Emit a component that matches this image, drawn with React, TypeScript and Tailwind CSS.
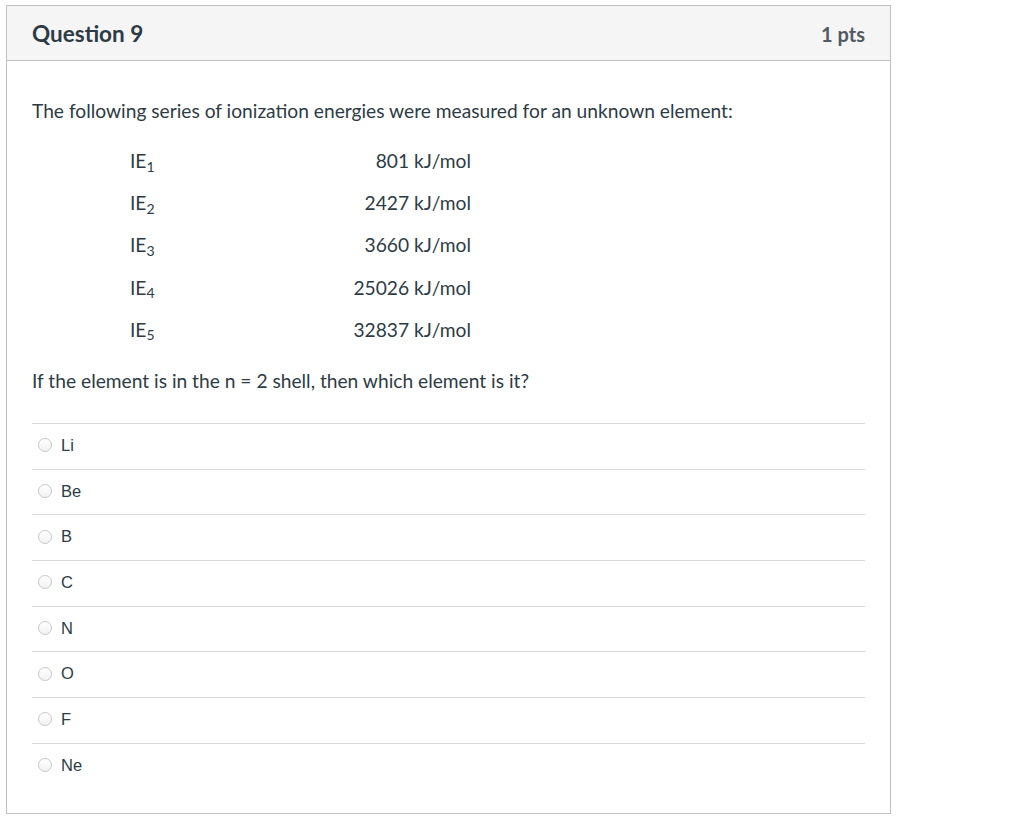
import React from "react"

const rows = [
  { n: "1", v: "801 kJ/mol" },
  { n: "2", v: "2427 kJ/mol" },
  { n: "3", v: "3660 kJ/mol" },
  { n: "4", v: "25026 kJ/mol" },
  { n: "5", v: "32837 kJ/mol" },
]

const answers = ["Li", "Be", "B", "C", "N", "O", "F", "Ne"]

export default function App() {
  return (
    <div className="min-h-[840px] bg-white pl-[6px] pt-[5px] font-['Lato',sans-serif] text-[#2d3b45]">
      <div className="w-[885px] border border-[#c1c1c1] bg-white">
        <div className="flex h-[55px] items-center justify-between border-b border-[#c1c1c1] bg-[#f5f5f5] px-[25px] pt-[2px]">
          <h2 className="text-[22.5px] font-bold leading-none text-[#2d3b45]">Question 9</h2>
          <span className="text-[20px] font-bold leading-none text-[#515a63]">1 pts</span>
        </div>
        <div className="px-[25px] pb-[25px] pt-[37px]">
          <p className="text-[19.2px] leading-[26px]">
            The following series of ionization energies were measured for an unknown element:
          </p>
          <table className="ml-[98px] mt-[16px] text-[19.2px] leading-[26px]">
            <tbody>
              {rows.map((r) => (
                <tr key={r.n} className="h-[42.2px]">
                  <td className="w-[210px] align-middle">
                    IE<sub className="text-[14px]">{r.n}</sub>
                  </td>
                  <td className="w-[131px] text-right align-middle">{r.v}</td>
                </tr>
              ))}
            </tbody>
          </table>
          <p className="mt-[17px] text-[19.2px] leading-[26px]">
            If the element is in the n = 2 shell, then which element is it?
          </p>
          <div className="mt-[29px]">
            {answers.map((a) => (
              <label
                key={a}
                className="flex h-[45.7px] items-center gap-[9px] border-t border-[#dadada] pb-[2px] pl-[6px] font-['Liberation_Sans',Arial,sans-serif] text-[16.5px] text-[#2d3b45]"
              >
                <span className="block h-[14px] w-[14px] rounded-full border border-[#c8c8c8] bg-gradient-to-b from-white to-[#f2f2f2]" />
                {a}
              </label>
            ))}
          </div>
        </div>
      </div>
    </div>
  )
}
